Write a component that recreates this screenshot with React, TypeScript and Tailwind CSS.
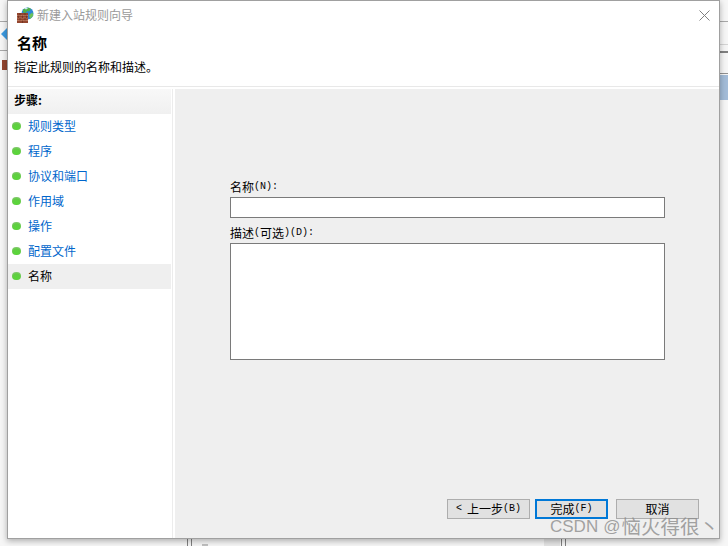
const cjk = "font-['Noto_Sans_CJK_SC','Liberation_Sans',sans-serif]";

const steps = ['规则类型', '程序', '协议和端口', '作用域', '操作', '配置文件', '名称'];

function Bullet() {
  return (
    <span className="h-[8px] w-[9px] shrink-0 rounded-full bg-[radial-gradient(circle_at_50%_75%,#58d838_0%,#62cc44_55%,#a8c8a0_100%)]" />
  );
}

// half-width latin, the picture's bitmap font sets these at 6px a character
function Half({ children }: { children: string }) {
  return <span className="font-['Liberation_Mono',monospace] text-[10px] leading-none">{children}</span>;
}

function WizardIcon() {
  return (
    <svg width="17" height="16" viewBox="0 0 17 16" className="shrink-0">
      <circle cx="10.5" cy="6.5" r="6" fill="#2f86d6" />
      <path d="M6 3c1.500-2.500 6-3 8-1l-2 2.500-2-.5-1 2-3-.5z" fill="#4fb04a" />
      <path d="M12 8l3.500-2.500.8 3-3 3.500z" fill="#6cc25a" />
      <path d="M7 1.500c1-1 3-1 4 0l-2 1z" fill="#cfe8f8" />
      <rect x="0" y="6" width="11" height="10" fill="#93462f" />
      <path d="M0 8.500h11M0 11h11M0 13.500h11" stroke="#c98a6e" strokeWidth="0.7" />
      <path d="M3 6v2.500M8 6v2.500M5.500 8.500V11M1.500 8.500V11M9.500 8.500V11M3 11v2.500M8 11v2.500M5.500 13.500V16" stroke="#5e2a1a" strokeWidth="0.6" />
    </svg>
  );
}

function DialogButton({ children, focused }: { children: React.ReactNode; focused?: boolean }) {
  return (
    <button
      className={`flex h-[20px] items-center justify-center bg-[#e1e1e1] text-[12px] leading-none text-black ${focused ? 'w-[73px] border-2 border-[#0078d7]' : 'w-[83px] border border-[#adadad]'}`}
    >
      {children}
    </button>
  );
}

export default function App() {
  return (
    <div className={`relative h-[546px] w-[728px] overflow-hidden bg-[#f6f6f6] ${cjk}`}>
      {/* bits of the window behind */}
      <div className="absolute left-0 top-[21px] h-px w-[7px] bg-[#a8a8a8]" />
      <div className="absolute left-[1px] top-[27px] h-[14px] w-[7px] bg-[#3c9ae0] [clip-path:polygon(100%_0,100%_100%,0_50%)]" />
      <div className="absolute left-0 top-[50px] h-px w-[7px] bg-[#a8a8a8]" />
      <div className="absolute left-[2px] top-[60px] h-[10px] w-[5px] bg-[#93462f]" />
      <div className="absolute right-0 top-[21px] h-px w-[8px] bg-[#a8a8a8]" />
      <div className="absolute right-0 top-[44px] h-px w-[8px] bg-[#d4d4d4]" />
      <div className="absolute right-0 top-[51px] h-[2px] w-[8px] bg-[#808080]" />
      <div className="absolute right-0 top-[73px] h-px w-[8px] bg-[#909090]" />
      <div className="absolute right-0 top-[75px] h-[25px] w-[8px] bg-[#a3bcd8]" />
      <div className="absolute bottom-0 left-[187px] h-[8px] w-[5px] border-x border-[#808080]" />
      <div className="absolute bottom-0 left-[202px] h-[2px] w-[6px] bg-[#c0c0c0]" />
      <div className="absolute bottom-0 left-[544px] h-[8px] w-[16px] bg-[#e4e4e4]" />
      <div className="absolute bottom-0 left-[561px] h-[8px] w-[5px] border-x border-[#808080]" />

      {/* dialog window */}
      <div className="absolute left-[7px] top-0 flex h-[539px] w-[713px] flex-col border border-[#a0a0a0] bg-white shadow-[0_2px_6px_rgba(0,0,0,0.3)]">
        <div className="flex h-[85px] shrink-0 flex-col">
          <div className="flex h-[28px] items-center pl-[9px] pr-[9px]">
            <WizardIcon />
            <span className="ml-[3px] text-[12px] leading-none text-[#9a9a9a]">新建入站规则向导</span>
            <svg width="11" height="11" viewBox="0 0 11 11" className="ml-auto">
              <path d="M0.5 0.5l10 10M10.5 0.5l-10 10" stroke="#808080" strokeWidth="1" fill="none" />
            </svg>
          </div>
          <h1 className="mt-[5px] pl-[9px] text-[15px] font-bold leading-[18px] text-black">名称</h1>
          <p className="mt-[8px] pl-[6px] text-[12px] leading-[14px] text-black">指定此规则的名称和描述。</p>
        </div>

        <div className="h-[3px] shrink-0 border-t border-[#e8e8e8] bg-white" />

        <div className="flex min-h-0 flex-1">
          <aside className="flex w-[163px] shrink-0 flex-col">
            <div className="flex h-[25px] shrink-0 items-center bg-gradient-to-b from-[#f8f8f8] to-[#f0f0f0] pb-[3px] pl-[6px] text-[12px] font-bold leading-none text-black">
              步骤:
            </div>
            <ul className="flex flex-col">
              {steps.map((step, i) => (
                <li
                  key={step}
                  className={`flex h-[25px] items-center gap-[7px] pb-[2px] pl-[4px] text-[12px] leading-none ${i === steps.length - 1 ? 'bg-[#efefef] text-black' : 'text-[#0066cc]'}`}
                >
                  <Bullet />
                  <span>{step}</span>
                </li>
              ))}
            </ul>
          </aside>
          <div className="w-px shrink-0 bg-white" />
          <div className="w-px shrink-0 bg-[#ececec]" />
          <div className="w-[2px] shrink-0 bg-white" />

          <main className="flex min-w-0 flex-1 flex-col bg-[#efefef] pl-[55px] pr-[20px]">
            <label className="mt-[91px] flex h-[14px] items-center text-[12px] leading-[14px] text-black">
              名称<Half>(N):</Half>
            </label>
            <input className="mt-[3px] h-[21px] w-[435px] shrink-0 border border-[#7a7a7a] bg-white" />
            <label className="mt-[8px] flex h-[14px] items-center text-[12px] leading-[14px] text-black">
              描述<Half>(</Half>可选<Half>)(D):</Half>
            </label>
            <textarea className="mt-[3px] h-[117px] w-[435px] shrink-0 resize-none border border-[#7a7a7a] bg-white" />
            <div className="mt-auto mb-[19px] flex self-end">
              <DialogButton>
                <Half>&lt;</Half>
                <span className="ml-[5px]">上一步</span>
                <Half>(B)</Half>
              </DialogButton>
              <div className="w-[5px]" />
              <DialogButton focused>
                完成<Half>(F)</Half>
              </DialogButton>
              <div className="w-[8px]" />
              <DialogButton>取消</DialogButton>
            </div>
          </main>
        </div>
      </div>

      {/* watermark */}
      <div className="absolute left-[550px] top-[515px] flex h-[24px] items-center gap-[5px] whitespace-nowrap font-['Liberation_Sans','Noto_Sans_CJK_SC',sans-serif] text-[17px] leading-[24px] text-[#8c8c8c]/80">
        <span>CSDN</span>
        <span>@</span>
        <span className="-ml-[4px] text-[19.5px]">恼火得很丶</span>
      </div>
    </div>
  );
}
